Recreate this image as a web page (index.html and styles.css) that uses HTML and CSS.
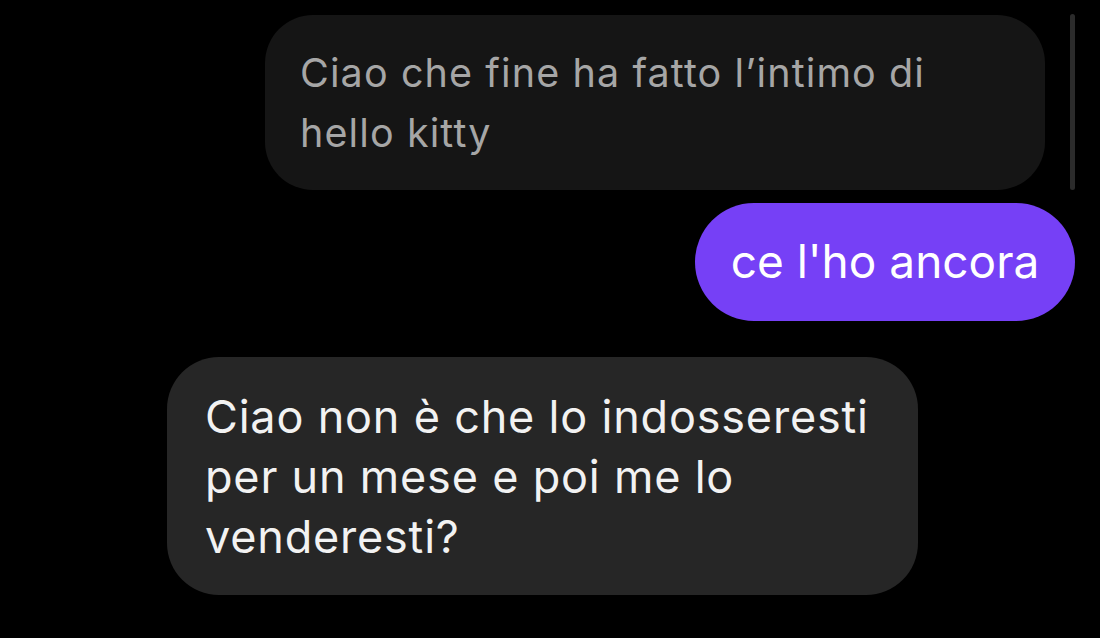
FILE: index.html
```html
<!DOCTYPE html>
<html lang="it">
<head>
<meta charset="utf-8">
<title>Chat</title>
<link rel="stylesheet" href="styles.css">
</head>
<body>
<main class="chat">
  <div class="row row-right-quoted">
    <div class="bubble bubble-quoted">Ciao che fine ha fatto l’intimo di hello kitty</div>
  </div>
  <div class="row row-right">
    <div class="bubble bubble-mine">ce l'ho ancora</div>
  </div>
  <div class="row row-left">
    <div class="bubble bubble-theirs">Ciao non è che lo indosseresti per un mese e poi me lo venderesti?</div>
  </div>
  <div class="scrollbar"></div>
</main>
</body>
</html>
```

FILE: styles.css
```css
* { box-sizing: border-box; }
html, body {
  margin: 0;
  padding: 0;
  background: #000;
  width: 1100px;
  height: 638px;
  overflow: hidden;
}
.chat {
  position: relative;
  display: flex;
  flex-direction: column;
  padding-top: 15px;
  font-family: Inter, Roboto, "Noto Sans", sans-serif;
}
.row {
  display: flex;
}
.row-right-quoted {
  justify-content: flex-end;
  padding-right: 55px;
}
.row-right {
  justify-content: flex-end;
  padding-right: 25px;
  margin-top: 13px;
}
.row-left {
  justify-content: flex-start;
  padding-left: 167px;
  margin-top: 36px;
}
.bubble {
  line-height: 60px;
}
.bubble-quoted {
  width: 780px;
  height: 175px;
  padding: 28px 35px 0;
  background: #151515;
  color: #a6a6a6;
  font-size: 39.5px;
  letter-spacing: 1.1px;
  border-radius: 48px;
}
.bubble-mine {
  width: 380px;
  height: 118px;
  padding: 28px 30px 0;
  background: #7640f6;
  color: #fff;
  font-size: 46px;
  border-radius: 59px;
  text-align: center;
}
.bubble-theirs {
  width: 751px;
  height: 238px;
  padding: 30px 38px 0;
  background: #262626;
  color: #f2f2f2;
  font-size: 45px;
  letter-spacing: 0.8px;
  border-radius: 52px;
}
.scrollbar {
  position: absolute;
  left: 1070px;
  top: 14px;
  width: 5px;
  height: 176px;
  border-radius: 3px;
  background: #2b2b2b;
}
```
